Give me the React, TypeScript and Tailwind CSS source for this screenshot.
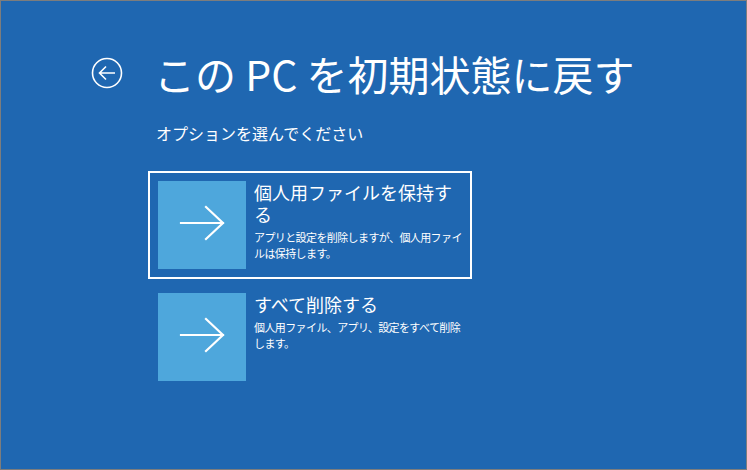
import React from "react";

const font = { fontFamily: '"Noto Sans CJK JP", "Noto Sans", sans-serif' };

function ArrowTile() {
  return (
    <div className="w-[88px] h-[88px] shrink-0 bg-[#4ea7dc]">
      <svg width="88" height="88" viewBox="0 0 88 88" fill="none">
        <path
          d="M23 42 H65 M48 26 L65 42 L48 58"
          stroke="white"
          strokeWidth="2.2"
          strokeLinecap="square"
        />
      </svg>
    </div>
  );
}

interface OptionProps {
  title: string;
  desc: string;
  selected?: boolean;
}

function Option({ title, desc, selected }: OptionProps) {
  return (
    <div
      className={`w-[324px] p-2 border-2 flex gap-2 ${
        selected ? "border-white" : "border-transparent"
      }`}
    >
      <ArrowTile />
      <div className="w-[208px] text-white">
        <div className="text-[18px] leading-[22px]">{title}</div>
        <div className="mt-1 text-[11px] leading-[16px] tracking-[-0.6px]">
          {desc}
        </div>
      </div>
    </div>
  );
}

export default function App() {
  return (
    <div
      className="w-[747px] h-[470px] bg-[#1f67b1] border border-[#7d7d7d] pt-[52px] pl-[90px]"
      style={font}
    >
      {/* Header */}
      <div className="flex items-center h-[40px]">
        <svg width="32" height="32" viewBox="0 0 32 32" fill="none">
          <circle cx="16" cy="16" r="14.5" stroke="white" strokeWidth="1.6" />
          <path
            d="M8.5 16 H24 M15 9.5 L8.5 16 L15 22.5"
            stroke="white"
            strokeWidth="1.6"
          />
        </svg>
        <h1 className="ml-[31px] text-[41px] leading-[40px] text-white font-normal whitespace-nowrap">
          この PC を初期状態に戻す
        </h1>
      </div>

      <div className="ml-[57px]">
        <p className="mt-[30px] ml-[8px] text-[16px] leading-[20px] text-white">
          オプションを選んでください
        </p>

        <div className="mt-[28px] flex flex-col gap-1">
          <Option
            selected
            title="個人用ファイルを保持する"
            desc="アプリと設定を削除しますが、個人用ファイルは保持します。"
          />
          <Option
            title="すべて削除する"
            desc="個人用ファイル、アプリ、設定をすべて削除します。"
          />
        </div>
      </div>
    </div>
  );
}
